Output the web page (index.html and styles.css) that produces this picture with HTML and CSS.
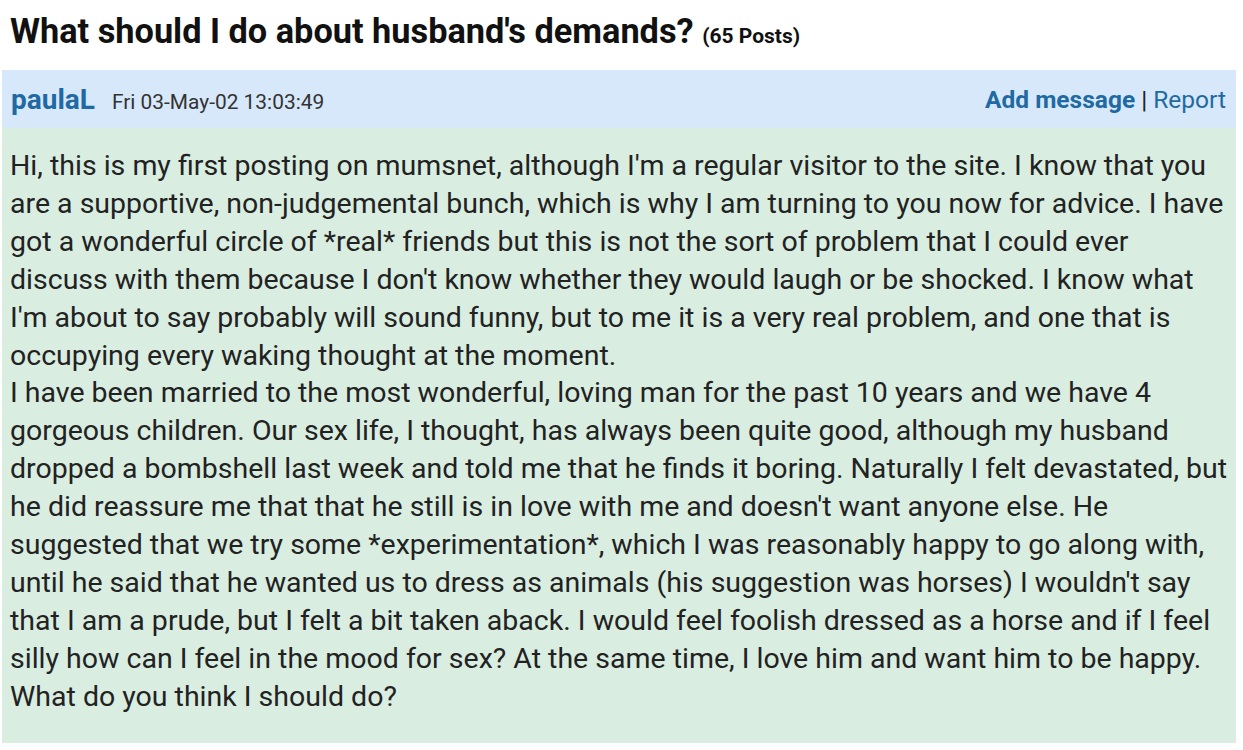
FILE: index.html
```html
<!DOCTYPE html>
<html lang="en">
  <head>
    <meta charset="UTF-8" />
    <title>What should I do about husband's demands?</title>
    <link rel="stylesheet" href="styles.css">
  </head>
  <body>
    <div class="thread">
      <h1 class="thread-title">What should I do about husband's demands? <span class="post-count">(65 Posts)</span></h1>
      <div class="post">
        <div class="post-header">
          <div class="post-meta">
            <a class="author" href="#">paulaL</a>
            <span class="post-date">Fri 03-May-02 13:03:49</span>
          </div>
          <div class="post-actions">
            <a class="add-message" href="#">Add message</a> | <a class="report" href="#">Report</a>
          </div>
        </div>
        <div class="post-body">
          <p>Hi, this is my first posting on mumsnet, although I'm a regular visitor to the site. I know that you are a supportive, non-judgemental bunch, which is why I am turning to you now for advice. I have got a wonderful circle of *real* friends but this is not the sort of problem that I could ever discuss with them because I don't know whether they would laugh or be shocked. I know what I'm about to say probably will sound funny, but to me it is a very real problem, and one that is occupying every waking thought at the moment.<br>I have been married to the most wonderful, loving man for the past 10 years and we have 4 gorgeous children. Our sex life, I thought, has always been quite good, although my husband dropped a bombshell last week and told me that he finds it boring. Naturally I felt devastated, but he did reassure me that that he still is in love with me and doesn't want anyone else. He suggested that we try some *experimentation*, which I was reasonably happy to go along with, until he said that he wanted us to dress as animals (his suggestion was horses) I wouldn't say that I am a prude, but I felt a bit taken aback. I would feel foolish dressed as a horse and if I feel silly how can I feel in the mood for sex? At the same time, I love him and want him to be happy.<br>What do you think I should do?</p>
        </div>
      </div>
    </div>
  </body>
</html>
```

FILE: styles.css
```css
body {
  margin: 0;
  font-family: Roboto, "Liberation Sans", sans-serif;
  background: #ffffff;
  color: #222;
}

.thread {
  padding: 0 7px 0 2px;
}

.thread-title {
  margin: 0;
  padding: 12px 0 0 8px;
  height: 70px;
  box-sizing: border-box;
  font-size: 34.3px;
  line-height: 38px;
  font-weight: 700;
  color: #111;
}

.post-count {
  font-size: 21px;
  font-weight: 700;
}

.post-header {
  display: flex;
  justify-content: space-between;
  align-items: center;
  background: #d7e8fa;
  height: 58px;
  padding: 0 10px 0 9px;
}

.post-meta {
  display: flex;
  align-items: baseline;
}

.author {
  font-size: 28px;
  font-weight: 700;
  color: #1f6aa3;
  text-decoration: none;
  margin-right: 17px;
}

.post-date {
  font-size: 20.9px;
  color: #333;
}

.post-actions {
  font-size: 24.5px;
  color: #222;
}

.post-actions a {
  color: #1f6aa3;
  text-decoration: none;
}

.add-message {
  font-weight: 700;
}

.post-body {
  background: #d9ede1;
  padding: 19px 8px 27px 8px;
}

.post-body p {
  margin: 0;
  font-size: 28.5px;
  line-height: 37.9px;
  color: #222;
}
```
